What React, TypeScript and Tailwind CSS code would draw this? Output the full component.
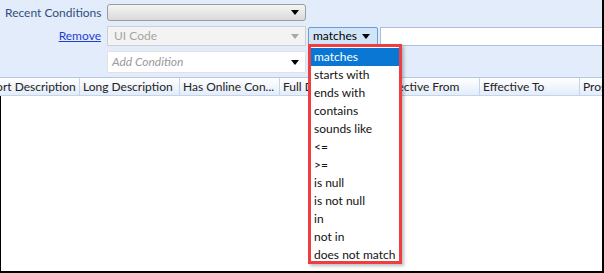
import React from 'react';

const font = { fontFamily: 'Lato, "Noto Sans", sans-serif' };

const Caret = ({ color = '#000' }: { color?: string }) => (
  <svg width="8" height="5" viewBox="0 0 8 5" className="shrink-0">
    <path d="M0 0h8L4 5z" fill={color} />
  </svg>
);

const options = [
  'matches',
  'starts with',
  'ends with',
  'contains',
  'sounds like',
  '<=',
  '>=',
  'is null',
  'is not null',
  'in',
  'not in',
  'does not match',
];

const columns = [
  'Short Description',
  'Long Description',
  'Has Online Con...',
  'Full Description',
  'Effective From',
  'Effective To',
  'Prospective',
];

const App: React.FC = () => {
  return (
    <div className="relative w-[604px] h-[273px] overflow-hidden bg-white text-[12px] text-black" style={font}>
      {/* Filter panel */}
      <div className="h-[78px] bg-[#e2ecfb] border-b border-[#b3c8e6] pt-[4px]">
        <div className="flex items-center h-[17px]">
          <div className="w-[107px] pl-[5px] text-[#334e7c]">Recent Conditions</div>
          <div className="w-[199px] h-[17px] flex items-center justify-end pr-[6px] rounded-[3px] border border-[#9c9c9c] bg-gradient-to-b from-[#f5f5f5] to-[#dadada]">
            <Caret />
          </div>
        </div>
        <div className="flex items-center h-[20px] mt-[5px]">
          <div className="w-[107px] pr-[6px] text-right">
            <span className="text-[#1f3fd1] underline">Remove</span>
          </div>
          <div className="w-[199px] h-[20px] flex items-center justify-between pl-[6px] pr-[6px] border border-[#cfcfcf] bg-[#f3f3f3] text-[#a5a5a5]">
            <span>UI Code</span>
            <Caret color="#a8a8a8" />
          </div>
          <div className="ml-[2px] w-[70px] h-[19px] flex items-center justify-between pl-[4px] pr-[7px] rounded-[2px] border border-[#6e9bd0] bg-[#d2e5f8]">
            <span>matches</span>
            <Caret />
          </div>
          <div className="ml-[2px] flex-1 h-[19px] border border-[#a9bfdc] bg-white" />
        </div>
        <div className="flex items-center h-[22px] mt-[5px]">
          <div className="w-[107px]" />
          <div className="w-[199px] h-[22px] flex items-center justify-between pl-[4px] pr-[6px] border border-[#e2e2e2] bg-white text-[#9a9a9a] italic">
            <span>Add Condition</span>
            <Caret />
          </div>
        </div>
      </div>

      {/* Grid header */}
      <div className="flex h-[18px] ml-[-20px] border-b border-[#c4d4ea] bg-gradient-to-b from-white to-[#e3ecf9] text-[#222]">
        {columns.map((c) => (
          <div key={c} className="w-[100px] shrink-0 h-full flex items-center pl-[3px] border-r border-[#c4d4ea] whitespace-nowrap overflow-hidden">
            {c}
          </div>
        ))}
      </div>

      {/* Operator dropdown list */}
      <div className="absolute left-[308px] top-[44px] w-[94px] h-[220px] border-[3px] border-[#ef3e42] bg-white shadow-[2px_2px_3px_rgba(0,0,0,0.25)] pt-[1px]">
        {options.map((o, i) => (
          <div
            key={o}
            className={
              i === 0
                ? 'h-[18px] flex items-center pl-[3px] bg-[#0a77d5] text-white'
                : 'h-[18px] flex items-center pl-[3px] text-[#111]'
            }
          >
            {o}
          </div>
        ))}
      </div>

      {/* Screenshot frame */}
      <div className="absolute left-0 top-[96px] bottom-0 w-[1px] bg-black" />
      <div className="absolute right-0 top-0 bottom-0 w-[2px] bg-black" />
      <div className="absolute left-0 right-0 bottom-0 h-[2px] bg-black" />
    </div>
  );
};

export default App;
